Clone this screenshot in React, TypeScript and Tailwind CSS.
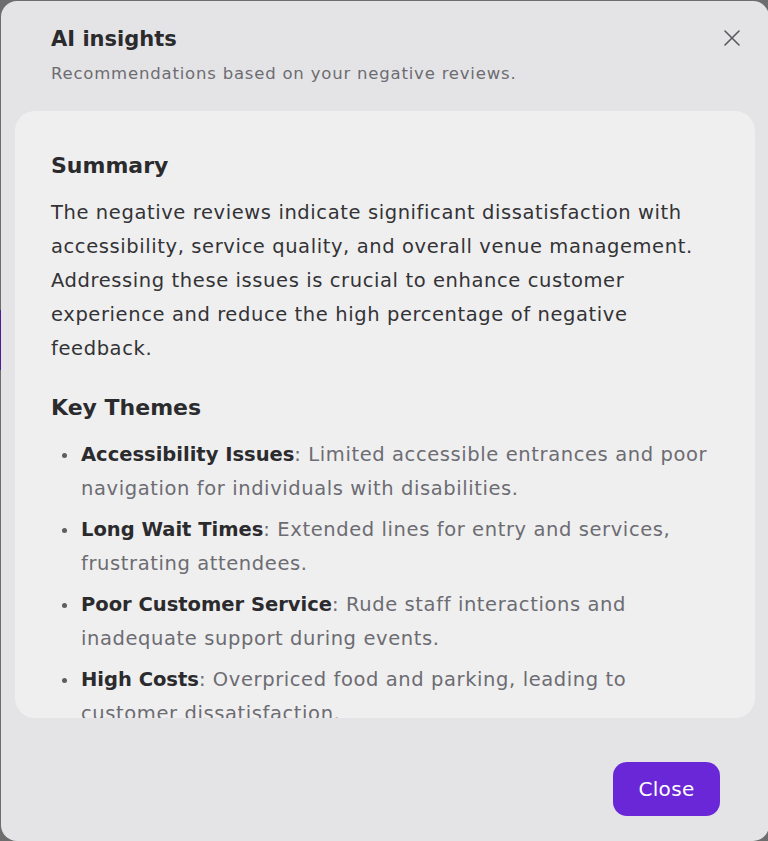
import React from "react";

const themes = [
  {
    title: "Accessibility Issues",
    text: "Limited accessible entrances and poor navigation for individuals with disabilities.",
  },
  {
    title: "Long Wait Times",
    text: "Extended lines for entry and services, frustrating attendees.",
  },
  {
    title: "Poor Customer Service",
    text: "Rude staff interactions and inadequate support during events.",
  },
  {
    title: "High Costs",
    text: "Overpriced food and parking, leading to customer dissatisfaction.",
  },
];

export default function App() {
  return (
    <div
      className="h-[841px] w-[768px] overflow-hidden bg-[#6d6d6d] flex"
      style={{ fontFamily: '"DejaVu Sans", "Noto Sans", sans-serif' }}
    >
      <div className="w-[1px] shrink-0 flex flex-col">
        <div className="h-[310px]" />
        <div className="h-[60px] bg-[#4c1d95]" />
      </div>

      <div className="mt-[1px] w-[768px] shrink-0 h-[840px] rounded-2xl bg-[#e4e4e6] flex flex-col overflow-hidden">
        <div className="flex items-start justify-between pl-[50px] pr-[26px] pt-[23px]">
          <div>
            <h2 className="text-[21px] leading-[30px] font-semibold text-[#2b2b2e]">AI insights</h2>
            <p className="mt-[9px] text-[16.5px] leading-[22px] tracking-[0.8px] text-[#6c6c72]">
              Recommendations based on your negative reviews.
            </p>
          </div>
          <button className="mt-[5px] mr-[2px] text-[#5a5a5e]">
            <svg width="18" height="18" viewBox="0 0 18 18" fill="none" stroke="currentColor" strokeWidth="1.6" strokeLinecap="round">
              <path d="M2 2 L16 16 M16 2 L2 16" />
            </svg>
          </button>
        </div>

        <div className="mt-[26px] mx-[14px] h-[607px] shrink-0 rounded-[20px] bg-[#efeff0] overflow-hidden pl-[36px] pr-[20px] pt-[40px]">
          <h3 className="text-[22px] leading-[30px] font-semibold text-[#2b2b2e]">Summary</h3>
          <p className="mt-[15px] max-w-[650px] text-[19.5px] leading-[34px] tracking-[0.6px] text-[#333336]">
            The negative reviews indicate significant dissatisfaction with accessibility, service quality, and overall venue
            management. Addressing these issues is crucial to enhance customer experience and reduce the high percentage of
            negative feedback.
          </p>

          <h3 className="mt-[27px] text-[22px] leading-[30px] font-semibold text-[#2b2b2e]">Key Themes</h3>
          <ul className="mt-[15px] flex flex-col gap-[7px]">
            {themes.map((t) => (
              <li key={t.title} className="flex text-[19.5px] leading-[34px] tracking-[0.6px]">
                <span className="w-[30px] shrink-0 flex justify-center pt-[15px] pr-[3px]">
                  <span className="w-[5px] h-[5px] rounded-full bg-[#5e5e62]" />
                </span>
                <span className="max-w-[636px] text-[#6c6c72]">
                  <strong className="font-semibold tracking-normal text-[#2b2b2e]">{t.title}</strong>: {t.text}
                </span>
              </li>
            ))}
          </ul>
        </div>

        <div className="flex justify-end pr-[49px] pt-[44px]">
          <button className="w-[107px] h-[54px] rounded-[14px] bg-[#6a27d8] text-white text-[20px] tracking-[0.3px] font-medium">
            Close
          </button>
        </div>
      </div>
    </div>
  );
}
